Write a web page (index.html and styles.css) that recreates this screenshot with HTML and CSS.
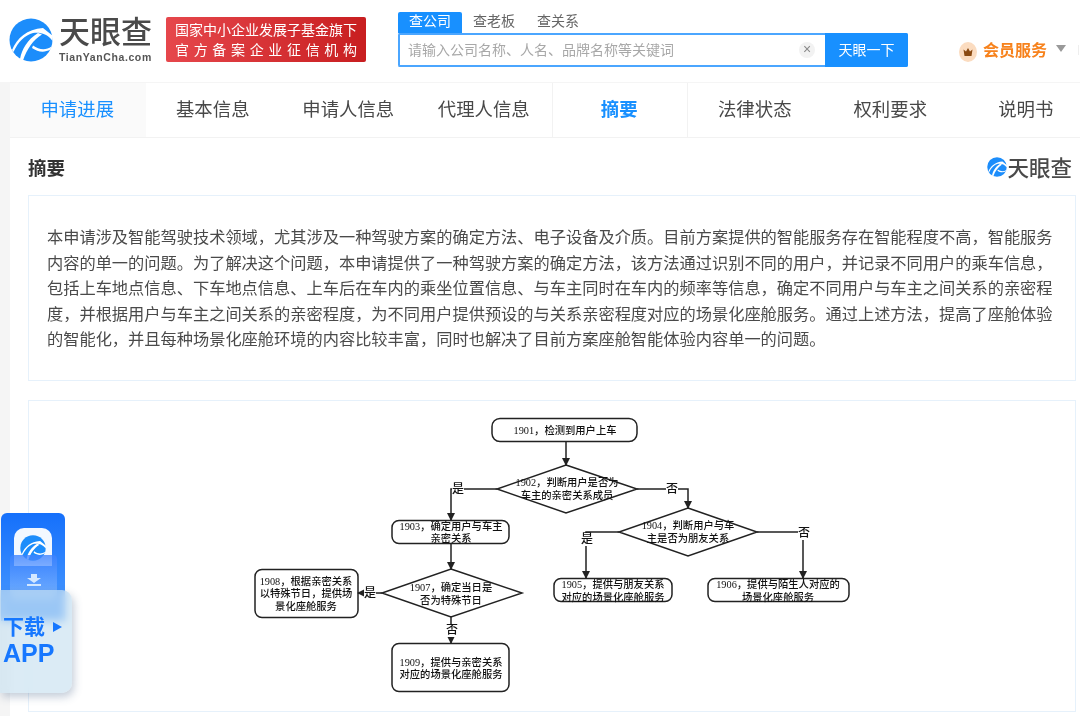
FILE: index.html
```html
<!DOCTYPE html>
<html lang="en">
<head>
    <meta charset="UTF-8">
    <meta name="viewport" content="width=device-width, initial-scale=1.0">
    <title>天眼查 摘要</title>
    <link rel="stylesheet" href="styles.css">
</head>
<body>

    <svg class="defs" width="0" height="0">
        <symbol id="eye" viewBox="0 0 44 44">
            <circle cx="22" cy="22" r="21.5" fill="#1c8dfb"/>
            <path d="M3 32C8 20 18 11 34 10L44 18L43.500 23C38 15 30 14 24 15C16 17 9 24 4.500 34Z" fill="#fff"/>
            <path d="M11 41C13 31 18 22 29 15L33 16.500C24 22 18 31 14 42.500Z" fill="#fff"/>
            <path d="M24 27.500C30 32 37 32.500 42.500 28.500L41.500 31.500C35 35 29 34 23 30Z" fill="#fff"/>
        </symbol>
    </svg>

    <div class="header">
        <div class="logo">
            <svg class="logo-icon"><use href="#eye"/></svg>
            <div class="logo-text">
                <div class="logo-name">天眼查</div>
                <div class="logo-url">TianYanCha.com</div>
            </div>
        </div>
        <div class="banner">
            <div>国家中小企业发展子基金旗下</div>
            <div class="banner-wide">官方备案企业征信机构</div>
        </div>
        <div class="search">
            <div class="search-tabs">
                <span class="search-tab active">查公司</span>
                <span class="search-tab">查老板</span>
                <span class="search-tab">查关系</span>
            </div>
            <div class="search-box">
                <span class="search-hint">请输入公司名称、人名、品牌名称等关键词</span>
                <span class="search-clear">×</span>
                <span class="search-btn">天眼一下</span>
            </div>
        </div>
        <div class="vip">
            <svg class="vip-icon" viewBox="0 0 18 20">
                <ellipse cx="9" cy="10" rx="9" ry="10" fill="#fbdcc0"/>
                <path d="M4.500 7.500L7 9.500L9 6L11 9.500L13.500 7.500L12.500 14H5.500Z" fill="#8a4a12"/>
            </svg>
            <span>会员服务</span>
            <i class="vip-arrow"></i>
        </div>
        <i class="edge"></i>
    </div>

    <div class="main">
        <div class="tabs">
            <div class="tab first">申请进展</div>
            <div class="tab">基本信息</div>
            <div class="tab">申请人信息</div>
            <div class="tab">代理人信息</div>
            <div class="tab current">摘要</div>
            <div class="tab">法律状态</div>
            <div class="tab">权利要求</div>
            <div class="tab">说明书</div>
        </div>

        <div class="title-row">
            <h2>摘要</h2>
            <div class="mark">
                <svg class="mark-icon"><use href="#eye"/></svg>
                <span>天眼查</span>
            </div>
        </div>

        <div class="panel abstract">本申请涉及智能驾驶技术领域，尤其涉及一种驾驶方案的确定方法、电子设备及介质。目前方案提供的智能服务存在智能程度不高，智能服务内容的单一的问题。为了解决这个问题，本申请提供了一种驾驶方案的确定方法，该方法通过识别不同的用户，并记录不同用户的乘车信息，包括上车地点信息、下车地点信息、上车后在车内的乘坐位置信息、与车主同时在车内的频率等信息，确定不同用户与车主之间关系的亲密程度，并根据用户与车主之间关系的亲密程度，为不同用户提供预设的与关系亲密程度对应的场景化座舱服务。通过上述方法，提高了座舱体验的智能化，并且每种场景化座舱环境的内容比较丰富，同时也解决了目前方案座舱智能体验内容单一的问题。</div>

        <div class="panel figure">
            <svg class="chart" width="620" height="295" viewBox="242 405 620 295">
                <defs>
                    <marker id="tip" markerWidth="8" markerHeight="8" refX="7" refY="4" orient="auto" markerUnits="userSpaceOnUse">
                        <path d="M0 0L8 4L0 8Z" fill="#222"/>
                    </marker>
                </defs>

                <!-- boxes -->
                <rect class="node" x="492" y="418.500" width="145" height="23" rx="8"/>
                <rect class="node" x="392" y="520.500" width="117" height="23" rx="7"/>
                <rect class="node" x="554" y="578.500" width="118" height="23" rx="7"/>
                <rect class="node" x="708" y="578.500" width="141" height="23" rx="7"/>
                <rect class="node" x="255" y="569.500" width="103" height="48" rx="7"/>
                <rect class="node" x="392" y="643.500" width="117" height="48" rx="7"/>
                <polygon class="node" points="566,465 637,489 566,513 497,489"/>
                <polygon class="node" points="688,508 757,532 688,556 619,532"/>
                <polygon class="node" points="451,569 522,593 451,617 382,593"/>

                <!-- links -->
                <path class="link" d="M566 442V465" marker-end="url(#tip)"/>
                <path class="link" d="M497 489H451V520" marker-end="url(#tip)"/>
                <path class="link" d="M637 489H688V508" marker-end="url(#tip)"/>
                <path class="link" d="M619 532H586V578" marker-end="url(#tip)"/>
                <path class="link" d="M757 532H803V578" marker-end="url(#tip)"/>
                <path class="link" d="M451 544V569" marker-end="url(#tip)"/>
                <path class="link" d="M382 593H358" marker-end="url(#tip)"/>
                <path class="link" d="M451 617V643" marker-end="url(#tip)"/>

                <!-- yes / no labels -->
                <rect class="gap" x="452" y="482" width="12" height="14"/>
                <rect class="gap" x="666" y="482" width="12" height="14"/>
                <rect class="gap" x="581" y="533" width="12" height="13"/>
                <rect class="gap" x="798" y="526" width="12" height="14"/>
                <rect class="gap" x="364" y="586" width="12" height="14"/>
                <rect class="gap" x="446" y="624" width="12" height="13"/>
                <text class="label" x="458" y="493">是</text>
                <text class="label" x="672" y="493">否</text>
                <text class="label" x="587" y="543">是</text>
                <text class="label" x="804" y="537">否</text>
                <text class="label" x="370" y="597">是</text>
                <text class="label" x="452" y="634">否</text>

                <!-- step text -->
                <text x="565" y="434">1901，检测到用户上车</text>
                <text x="567" y="486">1902，判断用户是否为</text>
                <text x="567" y="499">车主的亲密关系成员</text>
                <text x="451" y="530">1903，确定用户与车主</text>
                <text x="451" y="542">亲密关系</text>
                <text x="688" y="529">1904，判断用户与车</text>
                <text x="688" y="542">主是否为朋友关系</text>
                <text x="613" y="588">1905，提供与朋友关系</text>
                <text x="613" y="601">对应的场景化座舱服务</text>
                <text x="778" y="588">1906，提供与陌生人对应的</text>
                <text x="778" y="601">场景化座舱服务</text>
                <text x="451" y="591">1907，确定当日是</text>
                <text x="451" y="604">否为特殊节日</text>
                <text x="306" y="585">1908，根据亲密关系</text>
                <text x="306" y="597">以特殊节日，提供场</text>
                <text x="306" y="610">景化座舱服务</text>
                <text x="451" y="666">1909，提供与亲密关系</text>
                <text x="451" y="678">对应的场景化座舱服务</text>
            </svg>
        </div>
    </div>

    <div class="app">
        <div class="app-card">
            <div class="app-icon"><svg class="app-eye"><use href="#eye"/></svg></div>
            <div class="app-pocket">
                <svg class="app-down" viewBox="0 0 16 12"><path d="M5 0H11V4H15L8 9L1 4H5ZM1 10H15V12H1Z" fill="#d4e8ff"/></svg>
            </div>
        </div>
        <div class="app-glass">
            <div class="app-line">下载<i class="app-play"></i></div>
            <div class="app-name">APP</div>
        </div>
    </div>

</body>
</html>
```

FILE: styles.css
```css
* {
    box-sizing: border-box;
}
html, body {
    height: 100%;
}
body {
    margin: 0;
    overflow: hidden;
    background-color: #f5f5f5;
    font-family: "Liberation Sans", "Noto Sans CJK SC", sans-serif;
    color: #444;
}
.defs {
    position: absolute;
}

/* header */
.header {
    display: flex;
    height: 82px;
    background-color: #fff;
    filter: blur(.3px);
}
.logo {
    display: flex;
    width: 166px;
    padding: 18px 0 0 9px;
}
.logo-icon {
    width: 44px;
    height: 44px;
}
.logo-text {
    margin-left: 6px;
}
.logo-name {
    width: 94px;
    font-size: 31px;
    line-height: 30px;
    font-weight: 500;
    color: #4a4a4a;
}
.logo-url {
    margin-top: 3px;
    font-size: 10.500px;
    line-height: 13px;
    font-weight: 700;
    letter-spacing: .6px;
    color: #555;
}
.banner {
    width: 200px;
    height: 45px;
    margin-top: 17px;
    padding: 3px 9px 0;
    border-radius: 2px;
    background: linear-gradient(90deg, #e6474c, #c81e20);
    color: #fff;
    font-size: 14px;
    line-height: 20px;
    white-space: nowrap;
    text-align: center;
}
.banner-wide {
    text-align: justify;
    text-align-last: justify;
}
.search {
    width: 510px;
    margin: 12px 0 0 32px;
}
.search-tabs {
    display: flex;
    height: 21px;
}
.search-tab {
    width: 64px;
    font-size: 14px;
    line-height: 19px;
    text-align: center;
    color: #666;
}
.search-tab.active {
    border-radius: 2px 2px 0 0;
    background-color: #1890ff;
    color: #fff;
}
.search-box {
    display: flex;
    align-items: center;
    height: 34px;
    border: 2px solid #4ba6ff;
    border-right: 0;
    border-radius: 2px;
    background-color: #fff;
    width: 510px;
}
.search-hint {
    flex: 1;
    padding: 0 0 3px 8px;
    font-size: 14px;
    color: #a8a8a8;
}
.search-clear {
    width: 16px;
    height: 16px;
    margin-right: 10px;
    border-radius: 50%;
    background-color: #f2f2f2;
    font-size: 14px;
    line-height: 15px;
    text-align: center;
    color: #888;
}
.search-btn {
    width: 83px;
    height: 34px;
    margin: -2px 0;
    border-radius: 0 2px 2px 0;
    background-color: #1890ff;
    color: #fff;
    font-size: 14px;
    line-height: 34px;
    text-align: center;
}
.vip {
    display: flex;
    align-items: center;
    height: 36px;
    margin: 31px 0 0 51px;
    font-size: 16px;
    font-weight: 700;
    color: #f7821c;
}
.vip-icon {
    width: 18px;
    height: 20px;
    margin: 5px 6px 0 0;
}
.vip-arrow {
    width: 0;
    height: 0;
    margin: 0 0 2px 9px;
    border: 5px solid transparent;
    border-top: 7px solid #999;
    border-bottom: 0;
}
.edge {
    width: 1px;
    height: 10px;
    margin: 45px 1px 0 auto;
    background-color: #eee;
}

/* main column */
.main {
    height: 634px;
    margin: 1px 0 0 10px;
    overflow: hidden;
    background-color: #fff;
    filter: blur(.3px);
}
.tabs {
    display: flex;
    height: 55px;
    border-bottom: 1px solid #f2f2f2;
}
.tab {
    flex: 0 0 135.500px;
    padding-right: 1px;
    font-size: 18.400px;
    line-height: 54px;
    text-align: center;
    color: #484848;
}
.tab.first {
    background-color: #fafafa;
    color: #1890ff;
}
.tab.current {
    border-left: 1px solid #f2f2f2;
    border-right: 1px solid #f2f2f2;
    font-weight: 700;
    color: #1890ff;
}
.title-row {
    display: flex;
    justify-content: space-between;
    align-items: center;
    height: 57px;
    padding: 0 8px 0 18px;
}
h2 {
    margin: 0;
    font-size: 18.500px;
    font-weight: 700;
    color: #333;
}
.mark {
    display: flex;
    align-items: center;
    font-size: 21.500px;
    font-weight: 500;
    color: #4a4a4a;
}
.mark-icon {
    width: 20px;
    height: 20px;
}
.panel {
    width: 1048px;
    margin-left: 18px;
    border: 1px solid #e6f1fb;
}
.abstract {
    height: 186px;
    padding: 29px 18px;
    font-size: 16.230px;
    line-height: 25.500px;
    color: #4a4a4a;
}
.figure {
    height: 312px;
    margin-top: 19px;
    padding-top: 4px;
    text-align: center;
}

/* flowchart picture */
.chart {
    display: block;
    margin: 0 auto;
    filter: blur(.35px);
}
.chart text {
    font-family: "Liberation Serif", "Noto Sans CJK SC", serif;
    font-size: 10.300px;
    font-weight: 500;
    text-anchor: middle;
    fill: #111;
}
.chart .label {
    font-size: 12px;
}
.node {
    fill: none;
    stroke: #222;
    stroke-width: 1.500;
}
.link {
    fill: none;
    stroke: #222;
    stroke-width: 1.500;
}
.gap {
    fill: #fff;
}

/* download widget floating over the page */
.app {
    position: fixed;
    left: 0;
    top: 513px;
    width: 74px;
    height: 182px;
}
.app-card {
    position: absolute;
    left: 1px;
    top: 0;
    width: 64px;
    height: 108px;
    border-radius: 6px 6px 0 0;
    background: linear-gradient(180deg, #1570fb, #4d9cff);
}
.app-icon {
    position: absolute;
    left: 13px;
    top: 15px;
    width: 38px;
    height: 38px;
    padding: 7px 6px;
    border-radius: 10px 10px 0 0;
    background-color: #f2f8ff;
}
.app-eye {
    display: block;
    width: 26px;
    height: 26px;
}
.app-pocket {
    position: absolute;
    left: 9px;
    top: 42px;
    width: 47px;
    height: 45px;
    padding-top: 19px;
    border-radius: 4px 4px 0 0;
    background: linear-gradient(180deg, rgba(60, 130, 255, .8), rgba(170, 210, 255, .5));
}
.app-down {
    display: block;
    width: 16px;
    height: 12px;
    margin: 0 auto;
}
.app-glass {
    position: absolute;
    left: 0;
    top: 77px;
    width: 72px;
    height: 103px;
    padding: 24px 0 0 3px;
    border-radius: 0 10px 10px 0;
    background-color: rgba(200, 225, 240, .65);
    backdrop-filter: blur(4px);
    box-shadow: 2px 4px 8px rgba(60, 90, 130, .3);
    color: #1677ff;
    font-weight: 700;
}
.app-line {
    display: flex;
    align-items: center;
    font-size: 21px;
    line-height: 26px;
}
.app-play {
    width: 0;
    height: 0;
    margin-left: 8px;
    border-left: 9px solid #1677ff;
    border-top: 5px solid transparent;
    border-bottom: 5px solid transparent;
}
.app-name {
    font-size: 25px;
    line-height: 26px;
}
```
